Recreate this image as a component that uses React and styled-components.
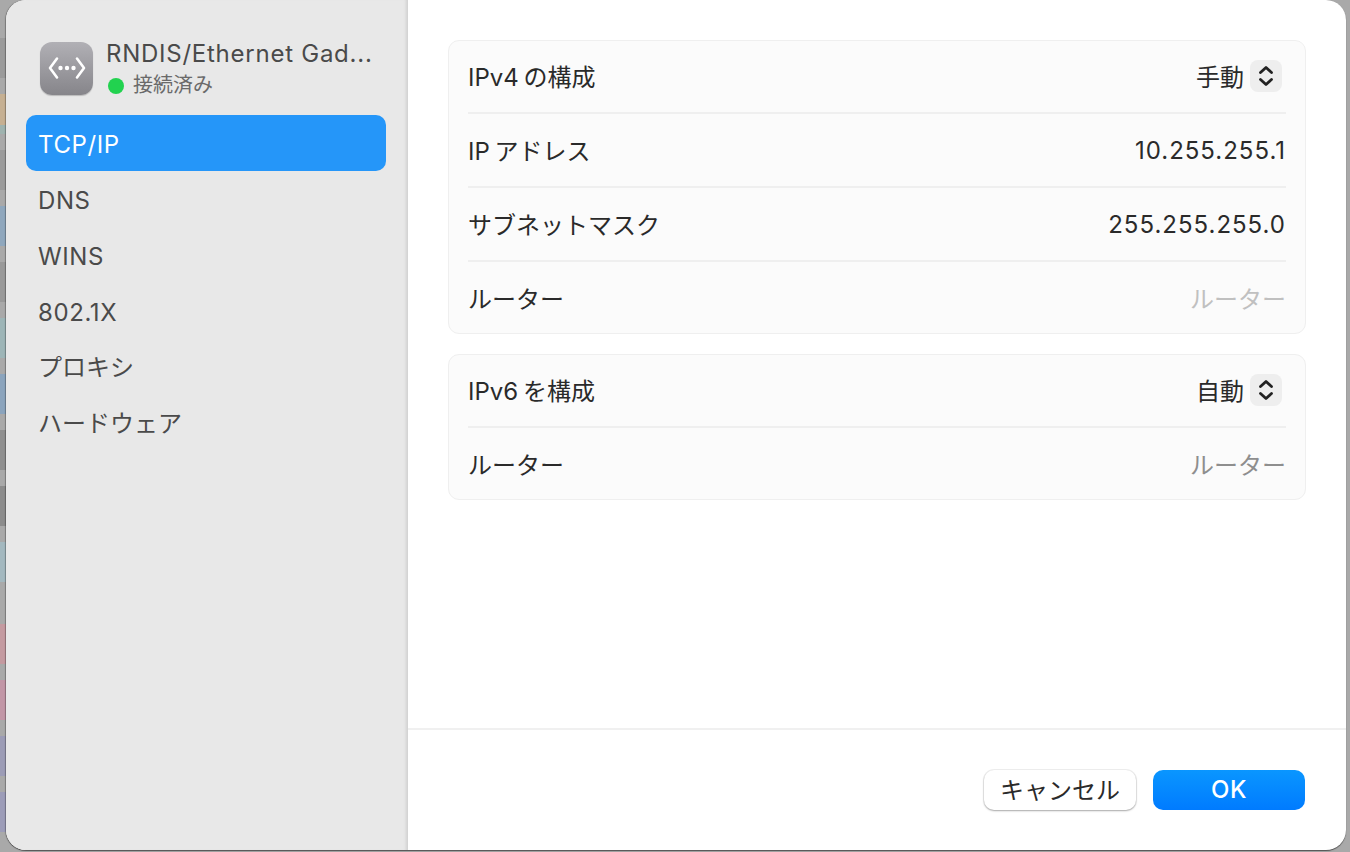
import styled, { createGlobalStyle } from 'styled-components'

const GlobalStyle = createGlobalStyle`
  html, body {
    margin: 0;
    padding: 0;
    height: 100%;
  }
  #root {
    height: 100%;
  }
  * {
    box-sizing: border-box;
  }
`

const FONT = `Inter, "Noto Sans CJK JP", sans-serif`

// blurred app icons of the window behind, only their left edge is visible
const BEHIND = [
  [38, 78, '#9b9b9b'],
  [94, 125, '#c6b092'],
  [125, 134, '#9fb3af'],
  [150, 190, '#9b9b9b'],
  [206, 246, '#8fa7bd'],
  [262, 302, '#999999'],
  [318, 358, '#9db5b7'],
  [374, 414, '#8ba4bd'],
  [430, 470, '#8f8f8f'],
  [486, 526, '#8c8c8c'],
  [542, 582, '#a3b8bf'],
  [624, 664, '#c49aa0'],
  [680, 720, '#c296a6'],
  [736, 776, '#9c9cb6'],
  [792, 832, '#9c9cb8'],
]

const behindGradient = `linear-gradient(180deg, ${BEHIND.map(
  ([from, to, color]) =>
    `#a9a9a9 ${from}px, ${color} ${from}px, ${color} ${to}px, #a9a9a9 ${to}px`,
).join(', ')})`

const Desktop = styled.div`
  width: 1350px;
  height: 852px;
  padding: 0 4px 2px 6px;
  overflow: hidden;
  font-family: ${FONT};
  background: ${behindGradient} 0 0 / 6px 100% no-repeat, #a9a9a9;
`

const Window = styled.div`
  display: flex;
  height: 100%;
  background: #fff;
  border-radius: 20px;
  overflow: hidden;
  box-shadow: 0 1px 1px rgba(0, 0, 0, 0.5), -1px 0 1px rgba(0, 0, 0, 0.25);
`

const Sidebar = styled.aside`
  flex: 0 0 402px;
  display: flex;
  flex-direction: column;
  padding: 41px 21px 0 20px;
  background: #e8e8e8;
  border-right: 1px solid #d4d4d4;
  box-shadow: inset -3px 0 3px -2px rgba(0, 0, 0, 0.1);
`

const DeviceHeader = styled.div`
  display: flex;
  align-items: center;
  gap: 13px;
  padding-left: 14px;
  height: 55px;
  margin-bottom: 19px;
`

const DeviceIcon = styled.div`
  flex: 0 0 53px;
  height: 53px;
  display: flex;
  align-items: center;
  justify-content: center;
  padding-bottom: 2px;
  border-radius: 12px;
  background: linear-gradient(180deg, #b1b0b5, #86858a);
  box-shadow: 0 1px 1px rgba(0, 0, 0, 0.2);
`

const DeviceInfo = styled.div`
  display: flex;
  flex-direction: column;
  gap: 4px;
  min-width: 0;
`

const DeviceName = styled.div`
  font-size: 24px;
  line-height: 30px;
  letter-spacing: 0.75px;
  color: #4a4a4a;
  white-space: nowrap;
`

const DeviceStatus = styled.div`
  display: flex;
  align-items: center;
  gap: 9px;
  padding-left: 2px;
  font-size: 20px;
  line-height: 25px;
  color: #6a6a6a;
`

const StatusDot = styled.span`
  width: 16px;
  height: 16px;
  border-radius: 50%;
  background: #22d24f;
`

const Nav = styled.nav`
  display: flex;
  flex-direction: column;
`

const NavItem = styled.div`
  height: 56px;
  display: flex;
  align-items: center;
  padding: ${(p) => (p.$jp ? '0 0 4px 12px' : '2px 0 0 12px')};
  border-radius: 10px;
  font-size: 24px;
  letter-spacing: ${(p) => (p.$jp ? '0' : '0.6px')};
  color: ${(p) => (p.$active ? '#fff' : '#4a4a4a')};
  background: ${(p) => (p.$active ? '#2596f9' : 'transparent')};
`

const Main = styled.main`
  flex: 1;
  display: flex;
  flex-direction: column;
  min-width: 0;
`

const Content = styled.div`
  flex: 1;
  display: flex;
  flex-direction: column;
  gap: 20px;
  padding: 40px 40px 0;
`

const Group = styled.section`
  border: 1px solid #efefef;
  border-radius: 11px;
  background: #fbfbfb;
  padding: 0 19px;
`

const Row = styled.div`
  height: 74px;
  display: flex;
  align-items: center;
  justify-content: space-between;
  border-bottom: 2px solid #efefef;
  padding-bottom: 2px;
  font-size: 24px;
  word-spacing: -2px;
  color: #2a2a2a;

  &:first-child {
    height: 73px;
  }

  &:last-child {
    height: 71px;
    border-bottom: none;
    padding-bottom: 0;
  }
`

const Value = styled.span`
  padding-top: 2px;
  letter-spacing: 1px;
  color: #2a2a2a;
`

const Placeholder = styled.span`
  color: ${(p) => (p.$dim ? '#8e8e8e' : '#c0c0c0')};
`

const Picker = styled.div`
  display: flex;
  align-items: center;
  gap: 6px;
  padding-right: 4px;
`

const Stepper = styled.span`
  width: 32px;
  height: 32px;
  display: flex;
  align-items: center;
  justify-content: center;
  border-radius: 8px;
  background: #eeeeee;
`

const Footer = styled.footer`
  flex: 0 0 122px;
  display: flex;
  justify-content: flex-end;
  align-items: flex-start;
  gap: 17px;
  padding: 40px 41px 0 0;
  border-top: 2px solid #f0f0f0;
`

const Button = styled.button`
  width: 152px;
  height: 40px;
  padding: 0 0 3px;
  border: none;
  border-radius: 10px;
  font-family: ${FONT};
  font-size: 24px;
  color: #2a2a2a;
  background: #fff;
  box-shadow: 0 0 0 1px rgba(0, 0, 0, 0.06), 0 1px 2px rgba(0, 0, 0, 0.3);
`

const PrimaryButton = styled(Button)`
  padding-bottom: 2px;
  font-weight: 500;
  letter-spacing: 0.5px;
  color: #fff;
  background: linear-gradient(180deg, #0a96ff, #007bff);
  box-shadow: none;
`

const NAV_ITEMS = [
  { label: 'TCP/IP' },
  { label: 'DNS' },
  { label: 'WINS' },
  { label: '802.1X' },
  { label: 'プロキシ', jp: true },
  { label: 'ハードウェア', jp: true },
]

function NetworkGlyph() {
  return (
    <svg width="38" height="24" viewBox="0 0 38 24" fill="none">
      <path
        d="M9 2.5 L2 12 L9 21.5 M29 2.5 L36 12 L29 21.5"
        stroke="#fff"
        strokeWidth="2.6"
        strokeLinecap="round"
        strokeLinejoin="round"
      />
      <circle cx="12.5" cy="12" r="2.2" fill="#fff" />
      <circle cx="19" cy="12" r="2.2" fill="#fff" />
      <circle cx="25.5" cy="12" r="2.2" fill="#fff" />
    </svg>
  )
}

function StepperGlyph() {
  return (
    <svg width="16" height="24" viewBox="0 0 16 24" fill="none">
      <path
        d="M2.5 8.5 L8 3.5 L13.5 8.5 M2.5 15.5 L8 20.5 L13.5 15.5"
        stroke="#222"
        strokeWidth="2.8"
        strokeLinecap="round"
        strokeLinejoin="round"
      />
    </svg>
  )
}

function PickerValue({ children }) {
  return (
    <Picker>
      <span>{children}</span>
      <Stepper>
        <StepperGlyph />
      </Stepper>
    </Picker>
  )
}

export default function App() {
  return (
    <>
      <GlobalStyle />
      <Desktop>
        <Window>
          <Sidebar>
            <DeviceHeader>
              <DeviceIcon>
                <NetworkGlyph />
              </DeviceIcon>
              <DeviceInfo>
                <DeviceName>RNDIS/Ethernet Gad...</DeviceName>
                <DeviceStatus>
                  <StatusDot />
                  接続済み
                </DeviceStatus>
              </DeviceInfo>
            </DeviceHeader>
            <Nav>
              {NAV_ITEMS.map((item, i) => (
                <NavItem key={item.label} $active={i === 0} $jp={item.jp}>
                  {item.label}
                </NavItem>
              ))}
            </Nav>
          </Sidebar>
          <Main>
            <Content>
              <Group>
                <Row>
                  <span>IPv4 の構成</span>
                  <PickerValue>手動</PickerValue>
                </Row>
                <Row>
                  <span>IP アドレス</span>
                  <Value>10.255.255.1</Value>
                </Row>
                <Row>
                  <span>サブネットマスク</span>
                  <Value>255.255.255.0</Value>
                </Row>
                <Row>
                  <span>ルーター</span>
                  <Placeholder>ルーター</Placeholder>
                </Row>
              </Group>
              <Group>
                <Row>
                  <span>IPv6 を構成</span>
                  <PickerValue>自動</PickerValue>
                </Row>
                <Row>
                  <span>ルーター</span>
                  <Placeholder $dim>ルーター</Placeholder>
                </Row>
              </Group>
            </Content>
            <Footer>
              <Button>キャンセル</Button>
              <PrimaryButton>OK</PrimaryButton>
            </Footer>
          </Main>
        </Window>
      </Desktop>
    </>
  )
}
